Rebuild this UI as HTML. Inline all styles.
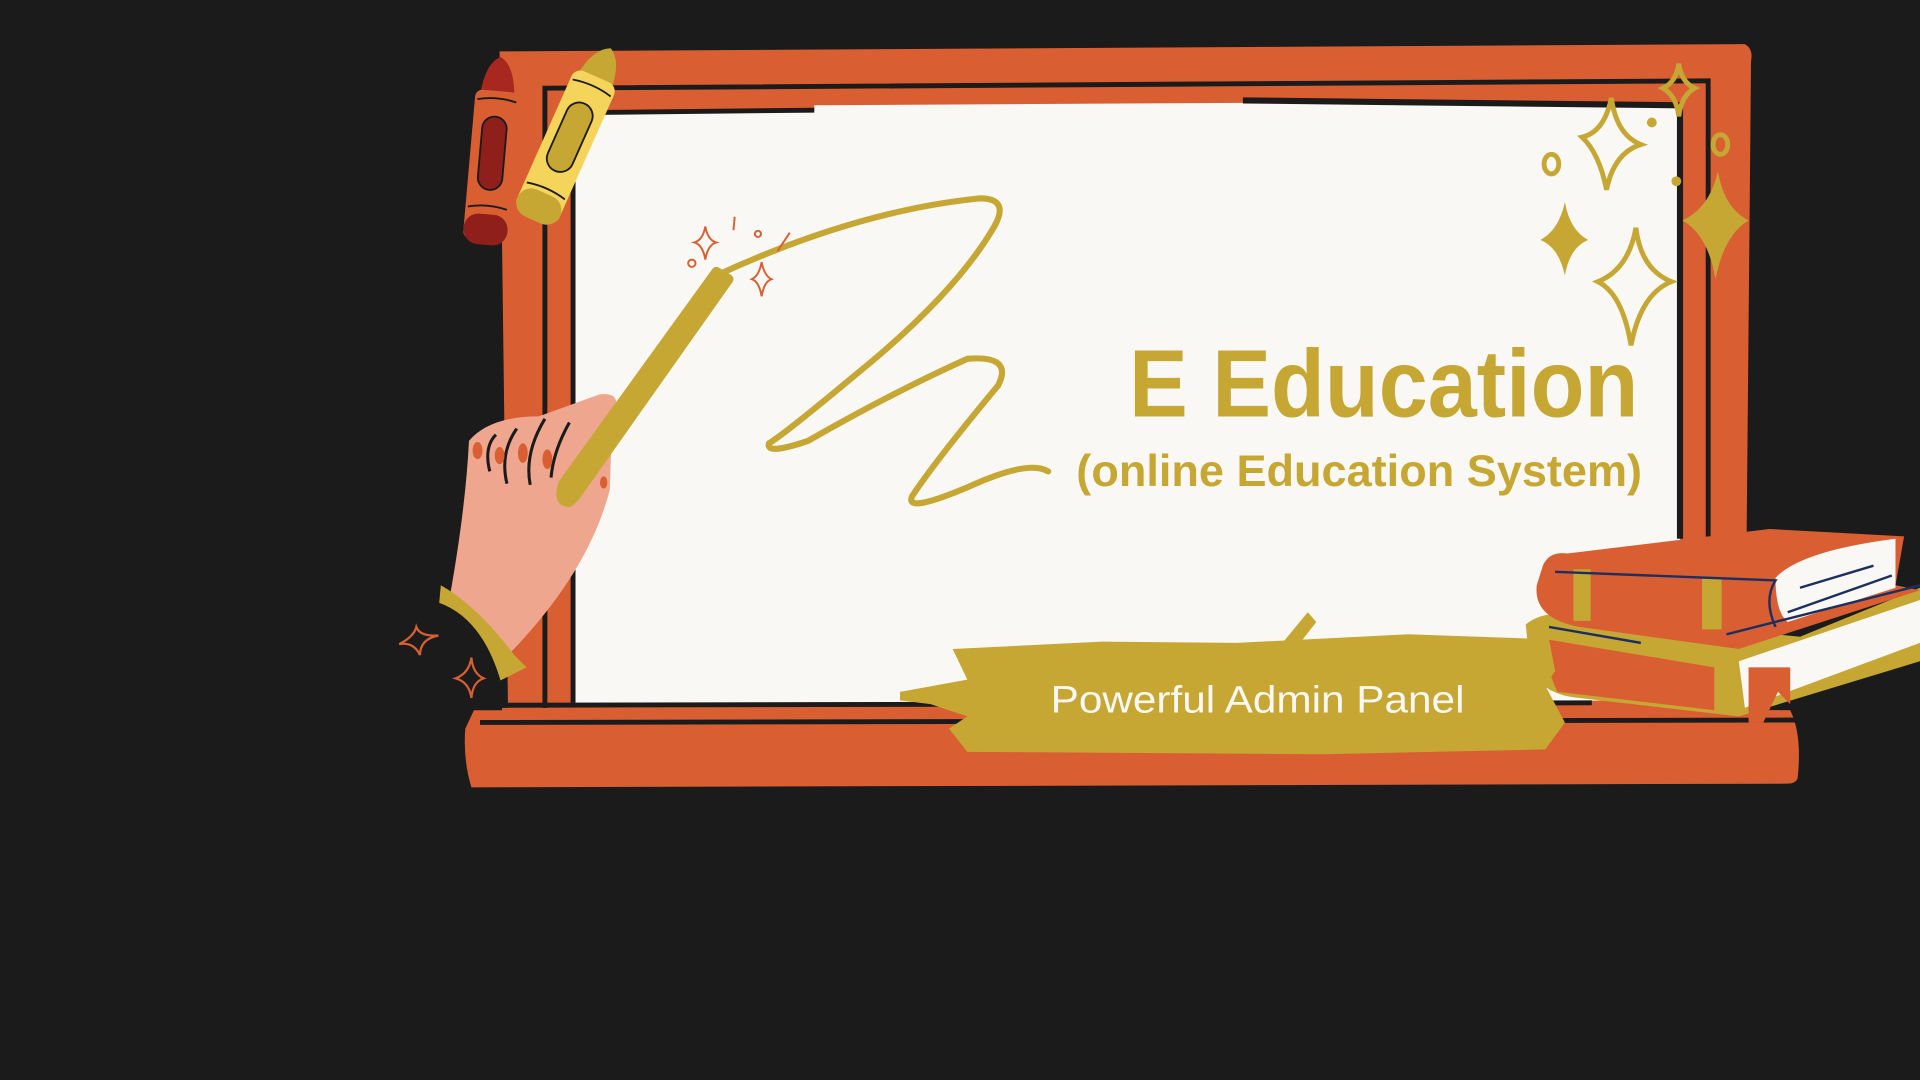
<!DOCTYPE html>
<html><head><meta charset="utf-8"><style>
html,body{margin:0;padding:0;background:#1b1b1b;width:1920px;height:1080px;overflow:hidden}
svg{display:block}
</style></head><body>
<svg width="1920" height="1080" viewBox="0 0 1568 882" xmlns="http://www.w3.org/2000/svg">
<rect width="1568" height="882" fill="#1b1b1b"/>
<!-- frame -->
<path d="M408 42 L1425 36 Q1432 40 1430 50 L1425 590 L415 590 Z" fill="#d95f33"/>
<path d="M445 72 L1395 66 L1395 582 L445 582 Z" fill="none" stroke="#1b1b1b" stroke-width="4"/>
<rect x="455" y="78" width="930" height="498" fill="#d95f33"/>
<!-- board -->
<path d="M468 92 L665 90 L665 86 L1015 84 L1015 82 L1372 86 L1372 572 L468 574 Z" fill="#f9f8f4"/>
<path d="M468 92 L665 90" stroke="#1b1b1b" stroke-width="4"/>
<path d="M1015 82 L1372 86 L1372 440" stroke="#1b1b1b" stroke-width="5" fill="none"/>
<path d="M468 92 L468 574" stroke="#1b1b1b" stroke-width="4"/>
<!-- ledge -->
<path d="M388 578 L1462 580 Q1472 600 1468 636 Q1466 640 1460 640 L385 643 Q378 620 380 595 Z" fill="#d95f33"/>
<path d="M392 590 L1470 588" stroke="#1b1b1b" stroke-width="4"/>
<path d="M390 576 L1300 574" stroke="#1b1b1b" stroke-width="4"/>
<!-- squiggle -->
<path d="M585 225 Q700 172 800 162 Q825 162 812 185 Q780 240 700 305 Q640 355 628 362 Q625 372 660 360 Q730 320 790 293 Q828 290 815 315 Q765 375 745 405 Q738 420 790 398 Q840 375 856 385" fill="none" stroke="#c6a734" stroke-width="5" stroke-linecap="round" stroke-linejoin="round"/>
<g fill="none" stroke="#d95f33" stroke-width="1.6">
<path d="M576 185 Q578 196 585 198 Q578 200 576 212 Q574 200 567 198 Q574 196 576 185Z"/>
<path d="M622 214 Q624 225 630 228 Q624 230 622 242 Q620 230 614 228 Q620 225 622 214Z"/>
<circle cx="565" cy="215" r="3"/><circle cx="619" cy="191" r="2.5"/>
<path d="M600 177 L599 188M645 190 L635 205"/>
</g>
<!-- hand -->
<path d="M383 360 Q400 340 440 340 L490 322 Q510 320 500 340 L498 400 Q480 470 410 540 L365 500 Q380 420 383 360Z" fill="#efa68f"/>
<path d="M470 405 L595 228 L585 222 L460 395 Q455 410 465 410Z" fill="#c6a734" stroke="#c6a734" stroke-width="8" stroke-linejoin="round"/>
<g stroke="#1b1b1b" stroke-width="2.5" fill="none"><path d="M400 385 Q395 365 405 355M414 395 Q408 370 422 350M433 396 Q428 370 445 342M450 390 Q452 368 465 345"/></g>
<g fill="#d95f33"><ellipse cx="390" cy="368" rx="4" ry="7"/><ellipse cx="408" cy="372" rx="4" ry="7"/><ellipse cx="427" cy="370" rx="4" ry="8"/><ellipse cx="447" cy="375" rx="4" ry="8"/><ellipse cx="493" cy="394" rx="3" ry="5"/></g>
<path d="M360 478 Q390 495 420 535 L430 545 L400 560 Q380 540 358 500Z" fill="#c6a734"/>
<path d="M358 492 Q395 505 410 560 L410 580 L320 580 Q330 500 358 492Z" fill="#1b1b1b"/>
<g fill="none" stroke="#d95f33" stroke-width="1.8">
<path d="M340 512 Q343 520 358 519 Q343 522 343 535 Q338 524 326 526 Q338 520 340 512Z"/>
<path d="M385 537 Q386 550 395 554 Q386 557 385 570 Q383 557 372 554 Q383 550 385 537Z"/>
</g>
<!-- crayons -->
<g transform="rotate(5 400 125)">
<path d="M388 78 Q390 52 402 46 Q414 52 416 78 Z" fill="#a8281f"/>
<rect x="384" y="74" width="36" height="122" rx="6" fill="#d95f33"/>
<rect x="392" y="95" width="20" height="60" rx="10" fill="#8e1f1b" stroke="#1b1b1b" stroke-width="1.5"/>
<path d="M386 82 Q402 78 418 82" stroke="#1b1b1b" stroke-width="1.5" fill="none"/>
<path d="M386 170 Q402 166 418 170" stroke="#1b1b1b" stroke-width="1.5" fill="none"/>
<rect x="384" y="175" width="36" height="25" rx="12" fill="#8e1f1b"/>
</g>
<g transform="rotate(24 466 108)">
<path d="M452 62 Q455 38 468 32 Q480 38 482 62Z" fill="#c6a734"/>
<rect x="448" y="58" width="38" height="125" rx="8" fill="#f4d45a"/>
<rect x="456" y="82" width="22" height="60" rx="11" fill="#c6a734" stroke="#1b1b1b" stroke-width="1.5"/>
<path d="M450 68 Q467 64 484 68" stroke="#1b1b1b" stroke-width="1.5" fill="none"/>
<path d="M450 160 Q467 156 484 160" stroke="#1b1b1b" stroke-width="1.5" fill="none"/>
<rect x="448" y="162" width="38" height="24" rx="12" fill="#c6a734"/>
</g>
<!-- gold sparkles -->
<g fill="none" stroke="#c6a734" stroke-width="4">
<path d="M1316 80 Q1320 110 1340 118 Q1318 125 1312 155 Q1306 125 1292 112 Q1310 108 1316 80Z"/>
<path d="M1336 186 Q1340 220 1365 230 Q1340 240 1332 282 Q1325 240 1305 230 Q1330 220 1336 186Z"/>
<path d="M1371 52 Q1373 67 1384 72 Q1373 78 1371 95 Q1369 78 1358 72 Q1369 67 1371 52Z"/>
<ellipse cx="1267" cy="134" rx="6" ry="8"/><ellipse cx="1405" cy="118" rx="6" ry="8"/>
</g>
<g fill="#c6a734">
<path d="M1278 165 Q1282 188 1297 196 Q1282 202 1278 225 Q1273 202 1258 196 Q1273 188 1278 165Z"/>
<path d="M1403 140 Q1408 170 1428 180 Q1408 192 1401 228 Q1395 192 1374 180 Q1396 170 1403 140Z"/>
<circle cx="1349" cy="100" r="4"/><circle cx="1369" cy="148" r="4"/>
</g>
<!-- books -->
<path d="M1246 510 Q1260 498 1290 502 L1470 520 L1568 480 L1568 540 L1420 585 L1290 570 Q1262 568 1250 548Z" fill="#c6a734"/>
<path d="M1262 522 L1400 545 L1400 580 L1272 565 Q1262 545 1262 522Z" fill="#d95f33"/>
<path d="M1420 540 L1568 490 L1568 525 L1425 578Z" fill="#f9f8f4"/>
<path d="M1260 462 Q1265 450 1280 452 L1445 432 L1555 438 L1548 478 L1568 482 L1420 530 L1290 512 Q1252 505 1255 478Z" fill="#d95f33"/>
<path d="M1450 472 Q1470 450 1548 440 L1548 480 L1460 508 Q1450 500 1450 472Z" fill="#f9f8f4"/>
<rect x="1285" y="465" width="14" height="42" fill="#c6a734"/><rect x="1390" y="472" width="16" height="42" fill="#c6a734"/>
<g stroke="#1b3060" stroke-width="2" fill="none"><path d="M1270 467 L1450 474 Q1440 490 1450 512M1470 480 L1530 462M1460 500 L1545 470M1265 512 L1340 525M1410 518 L1568 478"/></g>
<path d="M1428 545 L1462 545 L1462 575 L1452 565 L1440 590 L1428 590Z" fill="#d95f33"/>
<!-- title -->
<g fill="#c6a734" font-family="'Liberation Sans',sans-serif" font-weight="bold">
<text x="922" y="340" font-size="78" textLength="416" lengthAdjust="spacingAndGlyphs">E Education</text>
<text x="879" y="397" font-size="36" textLength="462" lengthAdjust="spacingAndGlyphs">(online Education System)</text>
</g>
<!-- banner -->
<path d="M1035 540 L1068 500 L1075 508 L1050 540Z" fill="#c6a734"/>
<path d="M735 565 L790 555 L778 530 L900 524 L1010 525 L1150 518 L1265 522 L1270 548 L1262 560 L1278 590 L1262 612 L1080 616 L790 614 L775 595 L790 585 L760 575 L735 572Z" fill="#c6a734"/>
<text x="858" y="582" font-size="31" fill="#f9f8f4" font-family="'Liberation Sans',sans-serif" textLength="338" lengthAdjust="spacingAndGlyphs">Powerful Admin Panel</text>
</svg>
</body></html>
